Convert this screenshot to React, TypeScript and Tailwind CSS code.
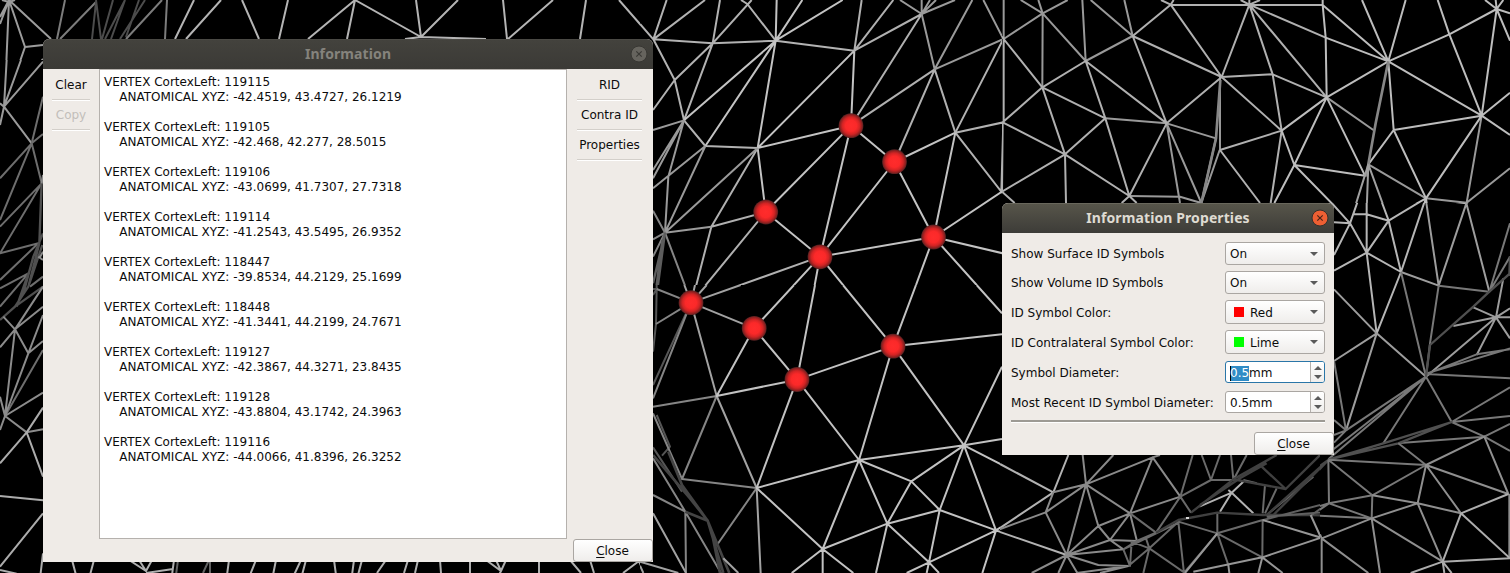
import { type ReactNode } from "react";

type Stroke = { c: string; d: string; w?: number };
type Tile = { x: number; y: number; w: number; h: number; s?: number; strokes: Stroke[] };

/* Surface mesh, stored as tiles. Path units are thirds of a pixel unless s = 1. */
const tiles: Tile[] = [
  {
    x: 0, y: 0, w: 660, h: 62, s: 1,
    strokes: [
      { c: "#9c9c9c", d: "M9 0L0 17M9 0L0 24M9 0L6 70M9 0L25 47L43 45M25 47L17 70M9 0L51 39M43 59L34 70M2 0L9 2L15 0" },
      { c: "#7c7c7c", d: "M65 0L57 39M96 2L60 39M162 0L126 39M167 0L165 39" },
      { c: "#4c4c4c", d: "M96 2L92 39M96 0L101 39M113 0L102 39M125 0L105 39M125 0L111 39M139 0L126 37M145 0L120 39" },
      { c: "#b4b4b4", d: "M194 0L175 39M221 0L186 39M242 0L259 39M288 0L279 39M355 0L308 39M355 0L347 39M355 0L421 37M416 0L421 37L458 0M405 39L421 37L486 39M503 0L507 39M553 0L508 39M586 0L580 39M619 0L653 39L660 18M653 39L660 54" },
    ],
  },
  {
    x: 0, y: 60, w: 50, h: 513,
    strokes: [
      { c: "#9a9a9a", d: "M12 140L20 0M12 140L63 0M12 140L129 5M12 140L0 130M12 140L0 195M12 140L95 250" },
      { c: "#6e6e6e", d: "M95 250L129 110M95 250L129 222M95 250L0 355M95 250L0 480M95 250L125 370L0 500M125 370L0 580L115 550L0 660M0 685L85 640L0 740M15 1068L129 870M129 650L90 680" },
      { c: "#505050", w: 7, d: "M125 365L118 550M118 550L85 680L45 740L0 780M129 520L100 590L70 700M85 640L50 740M127 555L85 680M45 740L129 680" },
      { c: "#8c8c8c", d: "M129 345L125 370M10 770L45 808L0 862M45 808L129 740M45 808L129 680M45 808L85 880L129 765M85 880L129 843M45 808L15 1068L85 880M15 1068L129 998M15 1068L0 1010M15 1068L0 1110M15 1068L80 1117L129 1108M115 590L129 600M129 575L118 595" },
      { c: "#acacac", d: "M80 1117L129 1043M80 1117L0 1210M80 1117L129 1250M0 1308L129 1321M129 1360L0 1520M0 1530L50 1541M129 1480L122 1539" },
    ],
  },
  {
    x: 43, y: 560, w: 617, h: 13, s: 1,
    strokes: [
      { c: "#b0b0b0", d: "M29 0L33 15M51 0L47 15M86 0L103 11M96 0L103 11L109 0M103 13L130 9M131 0L129 15M186 0L184 15M213 0L207 15M233 0L230 15M258 0L251 15M263 0L259 15M291 0L293 15M311 0L309 15M319 0L315 15M343 0L334 13M365 0L361 13M375 0L372 13M397 0L398 13M427 0V13M443 0L458 11L463 0M453 0L458 11L456 15M496 0V15M527 0L538 13M547 0L551 13M596 1L580 13M596 1L601 13M596 1L617 8" },
      { c: "#626262", d: "M135 0L133 15M166 0L160 13M167 0V13" },
    ],
  },
  {
    x: 640, y: 0, w: 362, h: 285,
    strokes: [
      { c: "#b2b2b2", d: "M40 118L0 72M40 118L80 0M40 118L195 0M40 118L218 130L240 0M218 130L335 0M303 0L322 12L407 122M218 130L407 122M40 118L104 240L132 361M218 130L104 240L39 330M218 130L132 361L196 438L353 444M407 122L643 152M1090 117L946 398L1090 367M1090 0L1090 367L1084 575L946 398M1084 575L1110 600M1090 117L1110 140" },
      { c: "#c3c3c3", d: "M410 0L407 122L487 0M407 122L608 0M407 122L353 444M407 122L196 438M407 122L132 361M643 152L633 377M643 152L353 444L633 377L540 770L763 486L633 377L377 636L353 444M377 636L540 770L881 711L763 486L946 398L881 711L1086 575M881 711L1110 765M881 711L1010 855L1012 858M881 711L828 855M540 770L342 985M540 770L471 1139M540 770L759 1039" },
      { c: "#b0b0b0", d: "M665 0L643 152L760 0M643 152L845 42M633 377L845 42M633 377L884 208L763 486M884 208L946 398M353 444L214 680L377 636L185 870M214 680L165 870M540 770L153 908" },
      { c: "#9a9a9a", d: "M780 0L845 42L845 0M845 42L870 0M845 42L888 0M845 42L945 0M845 42L884 208L997 0M884 208L1090 117L1030 0M196 438L75 698L353 444M132 361L39 390M132 361L39 510M132 361L39 535M132 361L85 530L75 698M196 438L39 565M75 698L214 680" },
      { c: "#858585", d: "M75 698L39 632M75 698L39 718M75 698L140 870M75 698L39 770" },
      { c: "#5d5d5d", w: 7, d: "M75 698L39 850M75 698L52 870M67 720L48 870" },
    ],
  },
  {
    x: 640, y: 285, w: 362, h: 288,
    strokes: [
      { c: "#555555", d: "M39 12L50 12L48 117L39 200M50 0L50 12M39 30L50 12M153 53L39 300M39 487L126 620M66 512L90 485L50 390" },
      { c: "#858585", d: "M153 53L50 12M153 53L48 117M153 53L39 340M39 365L230 333L126 582M39 385L126 582L350 609L233 777M39 630L136 680L138 864M39 520L136 680L243 864" },
      { c: "#444444", w: 8, d: "M85 500L126 600L203 707L268 864M39 510L150 640L203 707L250 864M136 680L203 707M215 740L240 864" },
      { c: "#a2a2a2", d: "M133 0L153 53L165 0M153 53L200 0M153 53L302 0M153 53L342 130M153 53L230 333L350 609L362 864M39 685L138 864M0 830L115 864M0 842L10 864M250 820L295 864" },
      { c: "#c2c2c2", d: "M462 0L342 130L471 284L525 0M342 130L230 333L471 284L759 184L828 0M759 184L609 0M1010 0L1086 85M759 184L1086 148M471 284L350 609L657 525L471 284M759 184L657 525L972 481L759 184M1086 245L972 481L1086 462M972 481L1110 552M972 481L1068 736L899 675L972 481L814 589L657 525L742 716L814 589L899 675L742 716L548 792L657 525M350 609L548 792L455 864M548 792V864M548 792L640 864M742 716L708 864M742 716L867 832L899 675M867 832L1068 736L1027 864M1068 736L1110 708M1068 736L1110 750M867 832L800 864M867 832L860 864M867 832L897 864" },
    ],
  },
  {
    x: 1002, y: 0, w: 508, h: 205,
    strokes: [
      { c: "#999999", d: "M5 0V117M5 117L122 40L121 262M122 40L56 0M122 40L109 0M122 40L197 0M122 40L251 183L241 0M251 183L392 108L367 0M392 108L266 0M310 355L494 370M494 370L534 609M494 370L598 609M598 609L534 590L382 588M494 370L642 415L598 609M654 231L654 450M653 450L598 609M974 292L1114 390M1099 493L1272 595L1394 608L1524 505M1394 608L1387 630M1439 347L1394 608" },
      { c: "#b0b0b0", d: "M-10 100L5 117L121 262L2 367L0 575M5 117V367M121 262L251 183L494 370L392 108L506 14L477 0M506 14L515 0M121 262L310 355L251 183M121 262L189 463L310 355L382 588L189 463L2 367M189 463L0 575L38 609M189 463L192 609M382 588L359 609M382 588L404 609M392 108L659 231L506 14L962 15M659 231L742 14L812 223L659 231L839 392M659 231L494 370L382 588M654 450L839 392L806 609M654 450L774 609M839 392L812 223L974 292L742 14L716 0M742 14V0M742 14L774 0M742 14L971 113" },
      { c: "#bdbdbd", d: "M962 0V15L1159 184L971 113L962 15M971 113L974 292L839 392L877 495L974 292L1159 184L1080 0M1159 184L1211 0M1159 184L1342 103L1307 0M1342 103L1484 27L1481 0M1484 27L1449 0M1484 27L1504 0M1484 27L1524 40M1484 27L1524 122M1484 27L1439 347L1342 103M1439 347L1159 184L1175 390L1439 347L1524 278M1439 347L1524 405M1439 347L1272 595L1175 390L1099 493M877 495L817 609M877 495L1009 630M877 495L1089 527L974 292M1272 595L1209 630M1272 595L1261 630M1272 595L1277 630" },
      { c: "#878787", w: 8, d: "M1159 184L1121 370L1099 493L1094 530M655 240L642 415L598 609" },
      { c: "#a0a0a0", d: "M1099 493L1149 630M1099 493L1056 630M1099 493L1094 630" },
    ],
  },
  {
    x: 1320, y: 203, w: 190, h: 370,
    strokes: [
      { c: "#b6b6b6", d: "M0 -39L90 61L42 58M90 61L42 156M90 61L125 -39M100 34H140L206 53L140 149L140 -39M90 61L140 149M206 53L172 -39M206 53L317 -14L439 1M206 53L243 207L317 -14L272 -39M317 -14L305 -39M317 -14L335 -39M42 203L140 149L243 207L170 391L140 149M439 1L447 -39M439 1L490 -39" },
      { c: "#9d9d9d", d: "M317 -14L356 248L439 1L508 266M243 207L356 248M42 259L170 391L42 474M170 391L78 682M170 391L318 521M528 343L570 316M528 343H570M528 343L570 406M528 343L460 313M528 343L400 369M528 343L550 226M528 343L470 456M528 343L318 521" },
      { c: "#787878", d: "M243 207L318 521M356 248L508 266L570 61M508 266L570 161M356 248L330 421L318 521L395 657L570 553M318 513L570 526M320 511L570 436M320 513L470 454L570 439M395 657L570 639M395 657L493 701L240 720M78 682L42 474M78 682L42 651M78 682L42 696M78 682L42 719M318 521L78 682M318 521L190 721M318 521L25 769M318 521L25 751" },
      { c: "#505050", w: 7, d: "M570 211L508 266L460 311L330 426L318 521M25 770L235 721L395 657L190 721L25 770M570 159L568 219" },
      { c: "#484848", w: 7, d: "M25 771L-130 936M25 771L-190 924" },
      { c: "#787878", d: "M493 701L570 663M493 701L570 744M25 770L318 786L235 721M25 770L157 877L318 786M25 770L27 901L157 877L155 946L0 938M155 946L27 901L0 909M27 901L-28 939" },
      { c: "#8f8f8f", d: "M318 786L493 701L565 873L318 786L293 901L157 877M293 901L155 946L5 1006L0 994M5 1006L5 1110M5 1006L145 1110M155 946L180 1110M155 946L368 1076L293 901L423 931L318 786M568 873V1066" },
      { c: "#adadad", d: "M565 873L423 931L368 1076L570 1066L423 931M368 1076L272 1110M368 1076L373 1110M368 1076L395 1110" },
    ],
  },
  {
    x: 1000, y: 450, w: 320, h: 123,
    strokes: [
      { c: "#b2b2b2", d: "M0 42L160 127L205 15M160 127L-12 242L200 315M598 170L695 128L730 95M685 120L695 128L760 190M695 128L660 185" },
      { c: "#8a8a8a", d: "M160 127L258 103L248 15M258 103L340 15M258 103L458 22L480 15M258 103L137 187L-12 242M160 127L137 187L200 315L258 103L295 228L390 190L258 103M390 190L458 22L541 140L390 190L410 270M390 190L330 270L295 228L200 315L330 270M200 315L370 298L330 270L410 273M200 315L295 345L385 348M200 315L95 369M200 315L175 369M200 315L232 369M230 369L385 348L300 369" },
      { c: "#6a6a6a", d: "M390 190L468 248M541 140L578 15M541 140L633 90L605 15M633 90L660 15M541 140L573 188M541 140L468 248M633 90H700L740 15M700 88L693 15M370 298L410 273L468 248M370 298L390 348L395 275L448 295L385 348M370 298L535 218M438 265L448 295L430 369M448 295L555 369M448 295L535 215L652 250L652 188M535 215L552 369L652 250L788 210L787 322L652 250L685 345M730 90L770 100M795 105L788 190M830 115L795 190M940 80L800 195" },
      { c: "#404040", w: 7, d: "M468 248L535 210L652 188L788 195L935 195L1050 200M573 188L700 88L830 15M600 165L720 85L800 40M785 50L857 117L700 88M857 117L960 15M800 195L985 30M820 195L985 30" },
      { c: "#606060", d: "M790 210L987 158L1050 148M935 195L987 158L985 32L1050 33M800 200L1050 180" },
      { c: "#969696", d: "M555 369L652 250M580 365L787 322L963 263L788 210M685 345L688 369M787 322L775 369M787 322L848 369M963 263L932 195M963 263V369" },
      { c: "#d8d8d8", w: 6, d: "M558 204H567" },
    ],
  },
];

const nodes = [
  [851, 125.7], [894.5, 161.7], [765.7, 212], [820, 256.8], [933.5, 237],
  [691, 302.7], [754.2, 328.3], [797, 379.5], [893, 346.2],
];

function Mesh() {
  return (
    <svg className="absolute inset-0 block" width="1510" height="573" viewBox="0 0 1510 573">
      <defs>
        <radialGradient id="node">
          <stop offset="0" stopColor="#ff2c2c" />
          <stop offset="0.45" stopColor="#fb2929" />
          <stop offset="0.7" stopColor="#d22424" />
          <stop offset="0.9" stopColor="#882020" />
          <stop offset="1" stopColor="#4c2020" />
        </radialGradient>
      </defs>
      {tiles.map((t, i) => {
        const s = t.s ?? 3;
        return (
          <svg key={i} x={t.x} y={t.y} width={t.w} height={t.h} viewBox={`0 0 ${t.w * s} ${t.h * s}`} overflow="hidden">
            <rect width="100%" height="100%" fill="#000" />
            {t.strokes.map((p, j) => (
              <path key={j} d={p.d} stroke={p.c} strokeWidth={s === 1 ? 2 : p.w ?? 6} fill="none" strokeLinejoin="round" />
            ))}
          </svg>
        );
      })}
      {nodes.map(([x, y]) => (
        <circle key={x} cx={x} cy={y} r="12.4" fill="url(#node)" />
      ))}
    </svg>
  );
}

const records = [
  ["119115", "-42.4519, 43.4727, 26.1219"],
  ["119105", "-42.468, 42.277, 28.5015"],
  ["119106", "-43.0699, 41.7307, 27.7318"],
  ["119114", "-41.2543, 43.5495, 26.9352"],
  ["118447", "-39.8534, 44.2129, 25.1699"],
  ["118448", "-41.3441, 44.2199, 24.7671"],
  ["119127", "-42.3867, 44.3271, 23.8435"],
  ["119128", "-43.8804, 43.1742, 24.3963"],
  ["119116", "-44.0066, 41.8396, 26.3252"],
];

function ToolItem({ children, disabled }: { children: ReactNode; disabled?: boolean }) {
  return (
    <button
      className={`block h-[30px] w-full border-b border-[#d3cfca] pt-[2px] text-center shadow-[0_1px_0_#fff] ${disabled ? "text-[#c2beba]" : ""}`}
    >
      {children}
    </button>
  );
}

function CloseButton() {
  return (
    <button className="h-[23px] w-[80px] rounded-[3px] border border-[#aaa6a2] bg-linear-to-b from-white to-[#efedeb] pt-[2px] pr-[1px]">
      <span className="underline decoration-1 underline-offset-2">C</span>lose
    </button>
  );
}

function CloseIcon({ active }: { active?: boolean }) {
  return (
    <svg width="18" height="18" viewBox="0 0 18 18" className="block">
      <circle cx="9" cy="9" r="8" fill={active ? "#ee5f33" : "#66645e"} stroke={active ? "#32312d" : "#383733"} strokeWidth="1" />
      <path d="M6.3 6.3L11.7 11.7M11.7 6.3L6.3 11.7" stroke={active ? "#4a2418" : "#3a3935"} strokeWidth="1.2" />
    </svg>
  );
}

function Combo({ label, swatch }: { label: string; swatch?: "red" | "lime" }) {
  return (
    <div className="flex h-full w-[100px] items-center rounded-[3px] border border-[#aaa6a2] bg-linear-to-b from-white to-[#efedeb] pr-[6px] pl-[4px]">
      {swatch && <span className={`mr-[6px] ml-[4px] size-[10px] ${swatch === "red" ? "bg-[#ff0000]" : "bg-[#00ff00]"}`} />}
      <span className="flex-1 pt-[2px]">{label}</span>
      <svg width="8" height="4" viewBox="0 0 8 4"><path d="M0 0H8L4 4Z" fill="#5a5a5a" /></svg>
    </div>
  );
}

function Spin({ focused }: { focused?: boolean }) {
  return (
    <div className={`flex h-full w-[100px] overflow-hidden rounded-[3px] border bg-white ${focused ? "border-[#2a76a8]" : "border-[#aaa6a2]"}`}>
      <div className="flex flex-1 items-center pt-[2px] pl-[4px]">
        {focused ? (
          <span className="flex h-[15px] items-center border-l border-black bg-[#308cc6] text-white"><span className="-ml-px">0.5</span></span>
        ) : (
          <span>0.5</span>
        )}
        <span>mm</span>
      </div>
      <div className="flex w-[14px] flex-col items-center justify-center gap-[5px] border-l border-[#b5b1ad] bg-linear-to-b from-white to-[#f0eeec]">
        <svg width="8" height="4" viewBox="0 0 8 4"><path d="M0 4H8L4 0Z" fill="#5a5a5a" /></svg>
        <svg width="8" height="4" viewBox="0 0 8 4"><path d="M0 0H8L4 4Z" fill="#5a5a5a" /></svg>
      </div>
    </div>
  );
}

function Row({ label, className, children }: { label: string; className: string; children: ReactNode }) {
  return (
    <div className={`flex items-center justify-between ${className}`}>
      <span className="pt-[2px]">{label}</span>
      {children}
    </div>
  );
}

function InformationWindow() {
  return (
    <section className="absolute top-[39px] left-[43px] flex h-[523px] w-[610px] flex-col overflow-hidden rounded-t-[6px] bg-[#efebe7]">
      <header className="flex h-[30px] shrink-0 items-center border-t border-[#4a4944] bg-linear-to-b from-[#43423d] to-[#3b3a36] pr-[5px] pb-[1px] pl-[23px]">
        <h1 className="flex-1 pb-[1px] text-center font-['Noto_Sans'] text-[14px] leading-[18px] font-bold tracking-[0.1px] text-[#85837d]">Information</h1>
        <CloseIcon />
      </header>
      <div className="flex h-[493px]">
        <nav className="w-[56px] shrink-0 px-[9px] pt-[1px]">
          <ToolItem>Clear</ToolItem>
          <ToolItem disabled>Copy</ToolItem>
        </nav>
        <div className="h-[470px] w-[468px] shrink-0 border border-[#b5b1ad] bg-white px-[4px] pt-[5px]">
          {records.map(([id, xyz]) => (
            <div key={id} className="mb-[15px] whitespace-pre">
              <div>VERTEX CortexLeft: {id}</div>
              <div>{"    "}ANATOMICAL XYZ: {xyz}</div>
            </div>
          ))}
        </div>
        <div className="flex flex-1 flex-col">
          <nav className="pt-[1px] pr-[11px] pl-[10px]">
            <ToolItem>RID</ToolItem>
            <ToolItem>Contra ID</ToolItem>
            <ToolItem>Properties</ToolItem>
          </nav>
          <div className="mt-auto flex justify-end"><CloseButton /></div>
        </div>
      </div>
    </section>
  );
}

function PropertiesWindow() {
  return (
    <section className="absolute top-[203px] left-[1002px] flex h-[252px] w-[332px] flex-col overflow-hidden rounded-t-[6px] bg-[#efebe7]">
      <header className="flex h-[30px] shrink-0 items-center border-t border-[#69675c] bg-linear-to-b from-[#57554a] to-[#3d3c38] pr-[5px] pb-[1px] pl-[23px]">
        <h1 className="flex-1 pb-[1px] text-center font-['Noto_Sans'] text-[14px] leading-[18px] font-bold tracking-[0.1px] text-[#dfdbd2]">Information Properties</h1>
        <CloseIcon active />
      </header>
      <div className="px-[9px] pt-[9px]">
        <Row label="Show Surface ID Symbols" className="h-[23px]"><Combo label="On" /></Row>
        <Row label="Show Volume ID Symbols" className="mt-[6px] h-[23px]"><Combo label="On" /></Row>
        <Row label="ID Symbol Color:" className="mt-[6px] h-[24px]"><Combo label="Red" swatch="red" /></Row>
        <Row label="ID Contralateral Symbol Color:" className="mt-[6px] h-[24px]"><Combo label="Lime" swatch="lime" /></Row>
        <Row label="Symbol Diameter:" className="mt-[7px] h-[22px]"><Spin focused /></Row>
        <Row label="Most Recent ID Symbol Diameter:" className="mt-[8px] h-[22px]"><Spin /></Row>
        <div className="mt-[7px] h-[3px] border-t-2 border-b border-t-[#9d9a94] border-b-white" />
      </div>
      <div className="mt-auto flex justify-end"><CloseButton /></div>
    </section>
  );
}

export default function App() {
  return (
    <main className="relative h-[573px] w-[1510px] overflow-hidden bg-black font-['DejaVu_Sans',sans-serif] text-[12px] leading-[15px] text-[#0c0c0c]">
      <Mesh />
      <InformationWindow />
      <PropertiesWindow />
    </main>
  );
}
